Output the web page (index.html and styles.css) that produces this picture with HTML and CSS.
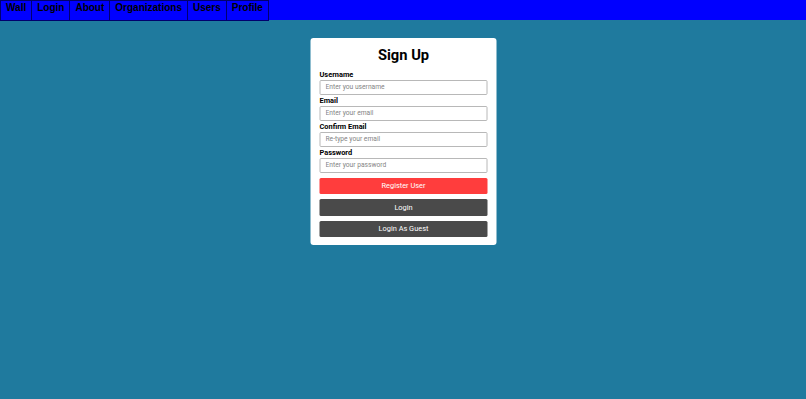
FILE: index.html
```html
<!DOCTYPE html>
<html lang="en">
<head>
    <meta charset="UTF-8">
    <meta name="viewport" content="width=device-width, initial-scale=1.0">
    <title>Sign Up</title>
    <link rel="stylesheet" href="styles.css">
</head>
<body>
    <nav class="navbar">
        <a class="nav-item" href="#">Wall</a>
        <a class="nav-item" href="#">Login</a>
        <a class="nav-item" href="#">About</a>
        <a class="nav-item" href="#">Organizations</a>
        <a class="nav-item" href="#">Users</a>
        <a class="nav-item" href="#">Profile</a>
    </nav>

    <div class="signup-card">
        <h1>Sign Up</h1>
        <form class="signup-form">
            <label for="username">Username</label>
            <input type="text" id="username" placeholder="Enter you username">
            <label for="email">Email</label>
            <input type="email" id="email" placeholder="Enter your email">
            <label for="confirmEmail">Confirm Email</label>
            <input type="email" id="confirmEmail" placeholder="Re-type your email">
            <label for="password">Password</label>
            <input type="password" id="password" placeholder="Enter your password">
            <button type="button" class="btn btn-register">Register User</button>
            <button type="button" class="btn btn-dark">Login</button>
            <button type="button" class="btn btn-dark">Login As Guest</button>
        </form>
    </div>
</body>
</html>
```

FILE: styles.css
```css
body {
    margin: 0;
    background-color: #1f7a9e;
    font-family: Roboto, "Liberation Sans", Arial, sans-serif;
    min-height: 399px;
}
.navbar {
    display: flex;
    height: 20px;
    background-color: #0000ff;
}
.nav-item {
    display: block;
    height: 19px;
    padding: 0 5px;
    border: 1px solid #00006e;
    margin-right: -1px;
    line-height: 13px;
    font-family: "Liberation Sans", Arial, sans-serif;
    font-size: 10px;
    font-weight: bold;
    color: #000;
    text-decoration: none;
}
.signup-card {
    width: 168px;
    margin: 17.5px auto 0;
    padding: 8px 9px 8px;
    background-color: white;
    border-radius: 3px;
    transform: translateX(0.5px);
}
.signup-card h1 {
    margin: 0 0 5px;
    font-size: 14.7px;
    line-height: 18px;
    text-align: center;
    color: #000;
}
.signup-form {
    display: flex;
    flex-direction: column;
}
.signup-form label {
    font-size: 7.4px;
    font-weight: bold;
    line-height: 11px;
    color: #000;
}
.signup-form input {
    box-sizing: border-box;
    width: 100%;
    height: 15px;
    margin: 0;
    padding: 0 5px;
    border: 1px solid #b8b8b8;
    border-radius: 1.5px;
    font-family: Roboto, "Liberation Sans", Arial, sans-serif;
    font-size: 6.7px;
    color: #222;
}
.signup-form input::placeholder {
    color: #858585;
}
.btn {
    height: 16.5px;
    margin-top: 5px;
    border: none;
    border-radius: 1.5px;
    padding: 0;
    font-family: Roboto, "Liberation Sans", Arial, sans-serif;
    font-size: 7.4px;
    color: white;
    cursor: pointer;
}
.btn-register {
    background-color: #ff3d3d;
}
.btn-dark {
    background-color: #4a4a4a;
}
```
